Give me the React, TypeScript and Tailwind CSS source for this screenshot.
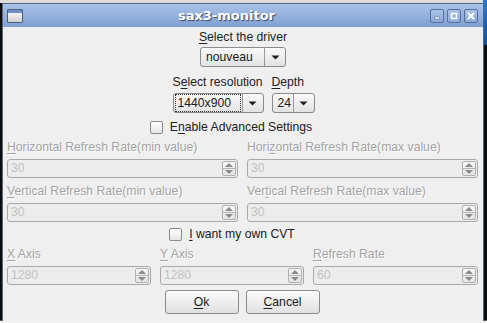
import React from 'react';

const label = "font-['Liberation_Sans',Arial,sans-serif] text-[12.2px] leading-[15px]";
const disabledText = 'text-[#a3a3a3] [text-shadow:1px_1px_0_#ffffff]';

function U({ children }: { children: React.ReactNode }) {
  return <span className="underline underline-offset-[2px] decoration-1">{children}</span>;
}

function Arrow() {
  return (
    <svg width="9" height="5" viewBox="0 0 9 5">
      <path d="M0.5 0.5 L8.5 0.5 L4.5 4.5 Z" fill="#202020" />
    </svg>
  );
}

function Combo({ value, width, focused }: { value: string; width: string; focused?: boolean }) {
  return (
    <div
      className={`flex h-[20px] ${width} rounded-[3px] border border-[#8b8b8b] bg-gradient-to-b from-[#fafafa] to-[#e2e2e2] ${label} text-[#202020]`}
    >
      <div className="flex flex-1 items-center px-[2px]">
        <div
          className={`flex h-[16px] flex-1 items-center pl-[2px] ${focused ? 'outline outline-1 outline-dotted outline-[#303030]' : 'pl-[3px]'}`}
        >
          {value}
        </div>
      </div>
      <div className="flex w-[21px] items-center justify-center border-l border-[#9a9a9a]">
        <Arrow />
      </div>
    </div>
  );
}

function Check({ children }: { children: React.ReactNode }) {
  return (
    <div className={`flex items-center gap-[7px] ${label} text-[#202020]`}>
      <div className="h-[13px] w-[13px] rounded-[2px] border border-[#8b8b8b] bg-gradient-to-b from-[#ffffff] to-[#e6e6e6]" />
      <span>{children}</span>
    </div>
  );
}

function SpinArrow({ up }: { up?: boolean }) {
  return (
    <svg width="8" height="4" viewBox="0 0 8 4">
      <path d={up ? 'M0 4 L8 4 L4 0 Z' : 'M0 0 L8 0 L4 4 Z'} fill="#8a8a8a" />
    </svg>
  );
}

function Spin({ value }: { value: string }) {
  return (
    <div className="flex h-[19px] rounded-[3px] border border-[#a9a9a9] bg-[#ececec]">
      <div className={`flex flex-1 items-center pl-[3px] ${label} text-[#c2c2c2]`}>{value}</div>
      <div className="my-[1px] mr-[1px] flex w-[14px] flex-col rounded-[2px] border border-[#b0b0b0] bg-gradient-to-b from-[#f6f6f6] to-[#e4e4e4]">
        <div className="flex flex-1 items-center justify-center border-b border-[#b5b5b5]">
          <SpinArrow up />
        </div>
        <div className="flex flex-1 items-center justify-center">
          <SpinArrow />
        </div>
      </div>
    </div>
  );
}

function Field({ title, value }: { title: React.ReactNode; value: string }) {
  return (
    <div className="flex flex-col">
      <div className={`h-[15px] ${label} ${disabledText}`}>{title}</div>
      <div className="mt-[4px]">
        <Spin value={value} />
      </div>
    </div>
  );
}

function TitleButton({ kind }: { kind: 'min' | 'max' | 'close' }) {
  return (
    <div className="flex h-[14px] w-[14px] items-center justify-center rounded-[2px] border border-[#5a6f95] bg-gradient-to-b from-[#a9c3e8] to-[#8aa9da]">
      <svg width="8" height="8" viewBox="0 0 8 8">
        {kind === 'min' && <rect x="1.5" y="5" width="5" height="2" fill="#ffffff" stroke="#4a5f85" strokeWidth="0.5" />}
        {kind === 'max' && (
          <rect x="1.5" y="1.5" width="5" height="5" fill="none" stroke="#ffffff" strokeWidth="1.5" />
        )}
        {kind === 'close' && (
          <path d="M1.5 1.5 L6.5 6.5 M6.5 1.5 L1.5 6.5" stroke="#ffffff" strokeWidth="2" strokeLinecap="square" />
        )}
      </svg>
    </div>
  );
}

function PushButton({ children }: { children: React.ReactNode }) {
  return (
    <div
      className={`flex h-[24px] w-[74px] items-center justify-center rounded-[3px] border border-[#8b8b8b] bg-gradient-to-b from-[#fbfbfb] to-[#e0e0e0] ${label} text-[#202020]`}
    >
      {children}
    </div>
  );
}

export default function App() {
  return (
    <div className="relative h-[323px] w-[487px] overflow-hidden bg-[#0c0c0c]">
      {/* desktop behind */}
      <div className="absolute left-0 top-0 h-[3px] w-[487px] bg-[#dcdcdc]" />
      <div className="absolute right-0 top-0 h-[45px] w-[4px] bg-gradient-to-b from-[#2a78cc] to-[#0f4f9e]" />
      <div className="absolute bottom-0 left-0 h-[3px] w-[487px] border-t border-[#5a5a5a] bg-[#f2f2f2]" />

      {/* window */}
      <div className="absolute left-[2px] top-[3px] flex h-[318px] w-[482px] flex-col border-x border-t border-[#55677f] bg-[#efefef]">
        <div className="relative flex h-[23px] items-center bg-gradient-to-b from-[#a8c2e8] to-[#819fd3] px-[4px]">
          <div className="flex h-[14px] w-[16px] flex-col overflow-hidden rounded-[1px] border border-[#4d5f80]">
            <div className="h-[3px] bg-[#6f90c6]" />
            <div className="flex-1 bg-gradient-to-b from-[#f4f4f4] to-[#cfcfcf]" />
          </div>
          <div className="flex flex-1 justify-center font-['DejaVu_Sans',sans-serif] text-[13px] font-bold text-white [text-shadow:1px_1px_1px_#3a4a66]">
            sax3-monitor
          </div>
          <div className="flex gap-[3px] pr-[1px]">
            <TitleButton kind="min" />
            <TitleButton kind="max" />
            <TitleButton kind="close" />
          </div>
        </div>

        <div className="flex flex-1 flex-col px-[4px] pt-[3px]">
          <div className="flex flex-col items-center">
            <div className={`${label} text-[#202020]`}>
              <U>S</U>elect the driver
            </div>
            <div className="mt-[2px]">
              <Combo value="nouveau" width="w-[86px]" />
            </div>
          </div>

          <div className="mt-[8px] flex justify-center gap-[8px] pl-[1px]">
            <div className="flex flex-col">
              <div className={`${label} text-[#202020]`}>
                S<U>e</U>lect resolution
              </div>
              <div className="mt-[3px]">
                <Combo value="1440x900" width="w-[91px]" focused />
              </div>
            </div>
            <div className="flex flex-col">
              <div className={`${label} text-[#202020]`}>
                <U>D</U>epth
              </div>
              <div className="mt-[3px]">
                <Combo value="24" width="w-[43px]" />
              </div>
            </div>
          </div>

          <div className="mt-[7px] flex justify-center pr-[24px]">
            <Check>
              E<U>n</U>able Advanced Settings
            </Check>
          </div>

          <div className="mt-[5px] grid grid-cols-2 gap-x-[9px] gap-y-[6px] pr-[1px]">
            <Field title={<><U>H</U>orizontal Refresh Rate(min value)</>} value="30" />
            <Field title={<>Hori<U>z</U>ontal Refresh Rate(max value)</>} value="30" />
            <Field title={<><U>V</U>ertical Refresh Rate(min value)</>} value="30" />
            <Field title={<>Ver<U>t</U>ical Refresh Rate(max value)</>} value="30" />
          </div>

          <div className="mt-[5px] flex justify-center pr-[22px]">
            <Check>
              <U>I</U> want my own CVT
            </Check>
          </div>

          <div className="mt-[5px] grid grid-cols-[144px_144px_1fr] gap-x-[9px] pr-[1px]">
            <Field title={<><U>X</U> Axis</>} value="1280" />
            <Field title={<><U>Y</U> Axis</>} value="1280" />
            <Field title={<><U>R</U>efresh Rate</>} value="60" />
          </div>

          <div className="mt-[5px] flex justify-center gap-[7px] pr-[2px]">
            <PushButton>
              <U>O</U>k
            </PushButton>
            <PushButton>
              <U>C</U>ancel
            </PushButton>
          </div>
        </div>
      </div>
    </div>
  );
}
